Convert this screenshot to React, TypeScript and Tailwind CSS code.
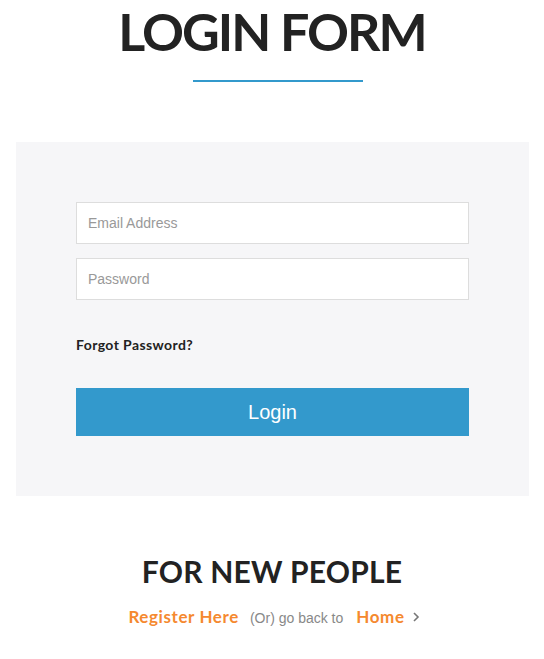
import React from "react";

export default function App() {
  return (
    <div className="w-[544px] h-[659px] bg-white overflow-hidden" style={{ fontFamily: "Lato, 'Open Sans', sans-serif" }}>
      <div className="flex flex-col items-center pt-[3px]">
        <h1 className="text-[52px] leading-[56px] font-bold text-[#222] tracking-[-2px]" style={{ fontFamily: "Lato, sans-serif" }}>LOGIN FORM</h1>
        <div className="mt-[21px] ml-[12px] w-[170px] h-[2px] bg-[#3399cc]" />
      </div>
      <div className="ml-[16px] w-[513px] mt-[60px] h-[354px] bg-[#f6f6f8] px-[60px] pt-[60px]">
        <div className="flex flex-col gap-[14px]">
          <input
            className="h-[42px] w-full bg-white border border-[#dddddd] px-[11px] text-[14px] text-[#555] placeholder:text-[#999] outline-none"
            style={{ fontFamily: "'Liberation Sans', Arial, sans-serif" }}
            placeholder="Email Address"
          />
          <input
            type="password"
            className="h-[42px] w-full bg-white border border-[#dddddd] px-[11px] text-[14px] text-[#555] placeholder:text-[#999] outline-none"
            style={{ fontFamily: "'Liberation Sans', Arial, sans-serif" }}
            placeholder="Password"
          />
        </div>
        <div className="mt-[36px] text-[14px] font-bold text-[#222] leading-[18px] tracking-[0.4px]">Forgot Password?</div>
        <button
          className="mt-[34px] h-[48px] w-full bg-[#3399cc] text-white text-[20px]"
          style={{ fontFamily: "'Liberation Sans', Arial, sans-serif" }}
        >
          Login
        </button>
      </div>
      <div className="flex flex-col items-center mt-[57px]">
        <h2 className="text-[30px] leading-[36px] font-bold text-[#222] tracking-[0.2px]">FOR NEW PEOPLE</h2>
        <div className="mt-[15px] ml-[4px] flex items-baseline text-[14px]">
          <span className="text-[#f5892f] font-bold text-[17px] tracking-[0.6px]">Register Here</span>
          <span className="ml-[11px] text-[#888]" style={{ fontFamily: "'Liberation Sans', Arial, sans-serif" }}>(Or) go back to</span>
          <span className="ml-[13px] text-[#f5892f] font-bold text-[17px] tracking-[0.6px]">Home</span>
          <svg className="ml-[7px] self-center" width="8" height="12" viewBox="0 0 8 12" fill="none">
            <path d="M2 2l4 4-4 4" stroke="#777" strokeWidth="1.6" />
          </svg>
        </div>
      </div>
    </div>
  );
}
